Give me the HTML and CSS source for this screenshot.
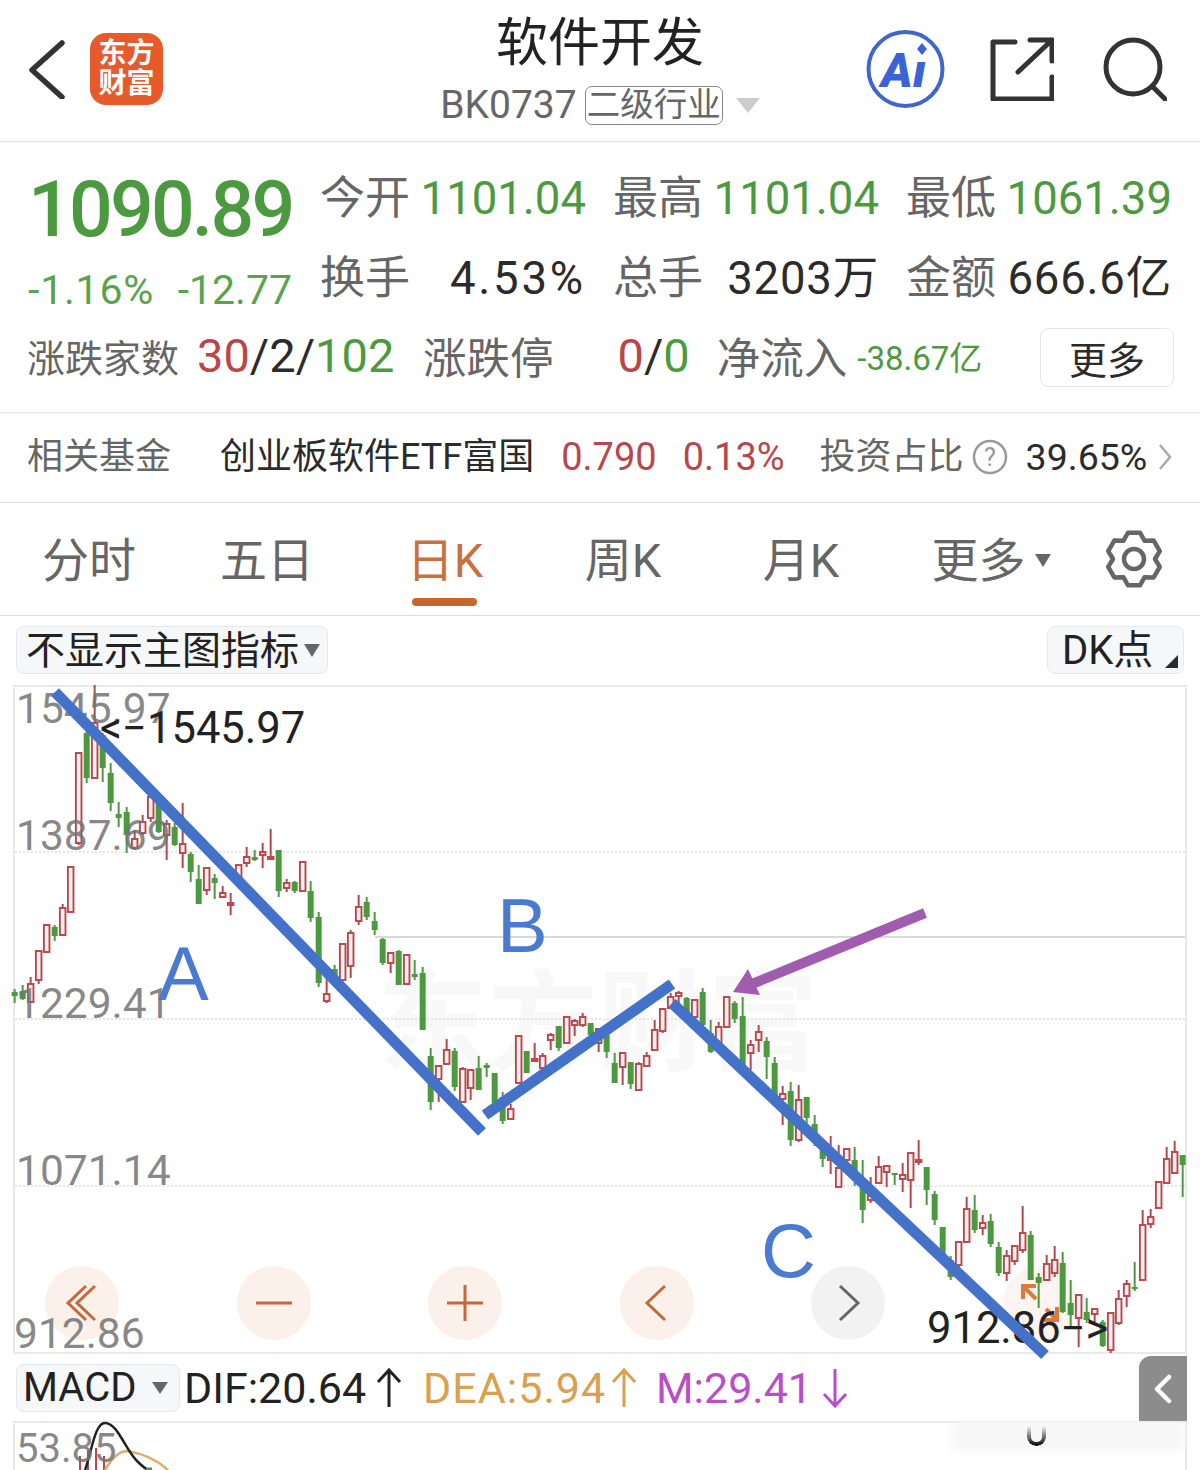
FILE: index.html
```html
<!DOCTYPE html>
<html lang="zh-CN">
<head>
    <meta charset="UTF-8">
    <meta name="viewport" content="width=device-width, initial-scale=1.0">
    <title>软件开发 BK0737</title>
    <link rel="stylesheet" href="styles.css">
</head>
<body>
    <header class="topbar">
        <div class="topbar-left">
            <svg class="back-icon" viewBox="0 0 40 60"><path d="M35 4 L5 31 L35 58"/></svg>
            <div class="logo"><span>东方</span><span>财富</span></div>
        </div>
        <div class="topbar-title">
            <h1>软件开发</h1>
            <div class="subtitle">
                <span class="code">BK0737</span>
                <span class="level-tag">二级行业</span>
                <span class="caret-down"></span>
            </div>
        </div>
        <div class="topbar-right">
            <svg class="ai-icon" viewBox="0 0 80 80">
                <circle cx="39.5" cy="40" r="37"/>
                <text x="15" y="58">Aı</text>
                <path class="ai-spark" d="M56 14 L61 20 L56 26 L51 20 Z"/>
            </svg>
            <svg class="line-icon share-icon" viewBox="0 0 64 64"><path d="M25 5 H3 V62 H62 V40 M28 35 L62 3 M40 3 H62 V24"/></svg>
            <svg class="line-icon" viewBox="0 0 64 64"><circle cx="30" cy="30" r="27"/><path d="M50 50 L62 62"/></svg>
        </div>
    </header>

    <section class="quote">
        <div class="quote-top">
            <div class="price">
                <div class="price-main">1090.89</div>
                <div class="price-change"><span class="pct">-1.16%</span><span>-12.77</span></div>
            </div>
            <div class="stats">
                <div class="stat"><span class="label">今开</span><span class="down">1101.04</span></div>
                <div class="stat"><span class="label">最高</span><span class="down">1101.04</span></div>
                <div class="stat"><span class="label">最低</span><span class="down">1061.39</span></div>
                <div class="stat"><span class="label">换手</span><span class="wide">4.53%</span></div>
                <div class="stat"><span class="label">总手</span><span class="unit">3203万</span></div>
                <div class="stat"><span class="label">金额</span><span class="unit">666.6亿</span></div>
            </div>
        </div>
        <div class="quote-bottom">
            <span class="label label-count">涨跌家数</span>
            <span class="ratio ratio-count"><span class="up">30</span>/2/<span class="down">102</span></span>
            <span class="label label-limit">涨跌停</span>
            <span class="ratio ratio-limit"><span class="up">0</span>/<span class="down">0</span></span>
            <span class="label label-flow">净流入</span>
            <span class="flow down">-38.67亿</span>
            <button class="more-btn">更多</button>
        </div>
    </section>

    <section class="fund">
        <span class="label">相关基金</span>
        <span class="fund-name">创业板软件ETF富国</span>
        <span class="up fund-price">0.790</span>
        <span class="up fund-pct">0.13%</span>
        <span class="label fund-share">投资占比</span>
        <svg class="help-icon" viewBox="0 0 36 36"><circle cx="18" cy="18" r="16"/><text x="18" y="27">?</text></svg>
        <span class="fund-value">39.65%</span>
        <svg class="fund-arrow" viewBox="0 0 14 30"><path d="M2 3 L12 15 L2 27"/></svg>
    </section>

    <nav class="tabs">
        <a>分时</a>
        <a>五日</a>
        <a class="active">日K</a>
        <a>周K</a>
        <a>月K</a>
        <a class="tab-more">更多<span class="caret-small"></span></a>
        <svg class="gear" viewBox="0 0 60 60">
            <path d="M23.9 3.7 L36.1 3.7 L40.5 11.8 L49.7 11.6 L55.8 22.1 L51 30 L55.8 37.9 L49.7 48.4 L40.5 48.2 L36.1 56.3 L23.9 56.3 L19.5 48.2 L10.3 48.4 L4.2 37.9 L9 30 L4.2 22.1 L10.3 11.6 L19.5 11.8 Z"/>
            <circle cx="30" cy="30" r="10"/>
        </svg>
    </nav>

    <div class="indicators">
        <div class="pill pill-main"><span class="pill-text">不显示主图指标</span><span class="caret-small dark"></span></div>
        <div class="pill pill-dk"><span class="pill-text">DK点</span><span class="corner"></span></div>
    </div>

    <div class="chart">
        <div class="zoom-row">
            <div class="zoom-btn"><svg viewBox="0 0 40 40"><path d="M24 3 L6 20 L24 37 M33 3 L15 20 L33 37"/></svg></div>
            <div class="zoom-btn"><svg viewBox="0 0 40 40"><path d="M2 20 H38"/></svg></div>
            <div class="zoom-btn"><svg viewBox="0 0 40 40"><path d="M2 20 H38 M20 2 V38"/></svg></div>
            <div class="zoom-btn"><svg viewBox="0 0 40 40"><path d="M28 3 L10 20 L28 37"/></svg></div>
            <div class="zoom-btn grey"><svg viewBox="0 0 40 40"><path d="M12 3 L30 20 L12 37"/></svg></div>
            <div class="zoom-btn faint"><svg viewBox="0 0 40 40"><path d="M3 16 V3 H16 M3 3 L16 16 M37 24 V37 H24 M37 37 L26 26"/></svg></div>
        </div>

        <svg id="candles" class="chart-layer" viewBox="13 685 1174 669">
            <text class="watermark" x="378" y="1062">东方财富</text>
            <path class="grid-dots" d="M15 852 H1185 M15 1019 H1185 M15 1186 H1185"/>
            <path class="grid-solid" d="M375 937 H1185"/>
        </svg>

        <span class="axis-label" style="top: 4px">1545.97</span>
        <span class="axis-label" style="top: 131px">1387.69</span>
        <span class="axis-label" style="top: 299px">1229.41</span>
        <span class="axis-label" style="top: 466px">1071.14</span>
        <span class="axis-label" style="top: 629px; left: 1px">912.86</span>
        <span class="extreme-label" style="top: 24px; left: 87px">&lt;−1545.97</span>
        <span class="extreme-label" style="top: 624px; left: 914px">912.86−&gt;</span>

        <!-- hand drawn wave markup on top of the chart -->
        <svg class="chart-layer markup" viewBox="13 685 1174 669">
            <path class="wave" d="M55 692 L482 1132"/>
            <path class="wave" d="M485 1115 L672 984"/>
            <path class="wave" d="M672 1003 L1045 1355"/>
            <path class="pointer" d="M925 913 L752 984"/>
            <path class="pointer-head" d="M733 992 L748 969 L760 995 Z"/>
            <text class="wave-letter" x="158" y="1000">A</text>
            <text class="wave-letter" x="497" y="952">B</text>
            <text class="wave-letter" x="761" y="1277">C</text>
        </svg>
    </div>

    <div class="macd-row">
        <div class="pill pill-macd">MACD<span class="caret-small"></span></div>
        <span class="macd-val macd-dif">DIF:20.64</span>
        <svg class="macd-arrow dif" viewBox="0 0 26 40"><path d="M13 39 V2 M2 14 L13 2 L24 14"/></svg>
        <span class="macd-val macd-dea">DEA:5.94</span>
        <svg class="macd-arrow dea" viewBox="0 0 26 40"><path d="M13 39 V2 M2 14 L13 2 L24 14"/></svg>
        <span class="macd-val macd-m">M:29.41</span>
        <svg class="macd-arrow m" viewBox="0 0 26 40"><path d="M13 1 V38 M2 26 L13 38 L24 26"/></svg>
        <div class="side-handle"><svg viewBox="0 0 20 30"><path d="M16 3 L4 15 L16 27"/></svg></div>
    </div>

    <div class="macd-chart">
        <svg class="chart-layer" viewBox="13 1421 1174 49">
            <path class="macd-bar-red" d="M80 1470 V1456 M88 1470 V1450 M96 1470 V1448 M104 1470 V1456"/>
            <path class="macd-dea-line" d="M105 1470 C112 1458 120 1451 127 1451 C140 1453 155 1458 168 1470"/>
            <path class="macd-dif-line" d="M85 1470 C92 1450 95 1423 105 1423 C118 1423 125 1450 138 1462 C142 1466 146 1470 150 1470"/>
            <path class="macd-bar-green" d="M146 1469 H152"/>
        </svg>
        <span class="macd-label">53.85</span>
        <div class="haze"></div>
        <div class="stub"></div>
    </div>

    <script src="chart.js"></script>
</body>
</html>
```
FILE: styles.css
```css
* {
    box-sizing: border-box;
}
body {
    font-family: Roboto, "Noto Sans CJK SC", sans-serif;
    margin: 0;
    width: 1200px;
    height: 1470px;
    overflow: hidden;
    background-color: #fff;
    color: #2b2b2b;
}
.up {
    color: #b8464a;
}
.down {
    color: #4c9a40;
}
.label {
    color: #666;
}

/* top bar */
.topbar {
    display: grid;
    grid-template-columns: 1fr auto 1fr;
    height: 142px;
    border-bottom: 1px solid #ddd;
}
.topbar-left {
    display: flex;
    align-items: center;
    gap: 23px;
    padding: 0 0 3px 27px;
}
.back-icon {
    width: 40px;
    height: 60px;
    fill: none;
    stroke: #333;
    stroke-width: 5.5;
    stroke-linecap: round;
    stroke-linejoin: round;
}
.logo {
    display: flex;
    flex-direction: column;
    align-items: center;
    justify-content: center;
    width: 73px;
    height: 72px;
    background-color: #e75a2b;
    border-radius: 16px;
    color: #fff;
    font-size: 28px;
    font-weight: 700;
    line-height: 30px;
}
.topbar-title {
    text-align: center;
}
.topbar-title h1 {
    margin: 14px 0 0;
    font-size: 52px;
    font-weight: 400;
    line-height: 60px;
    color: #222;
}
.subtitle {
    display: flex;
    align-items: center;
    margin-top: 11px;
    height: 40px;
    color: #666;
}
.code {
    font-size: 39px;
}
.level-tag {
    margin-left: 8px;
    padding: 0 1px;
    height: 39px;
    border: 1.5px solid #888;
    border-radius: 7px;
    font-size: 33.5px;
    line-height: 35px;
}
.caret-down {
    margin-left: 13px;
    border-style: solid;
    border-width: 15px 12px 0;
    border-color: #ccc transparent transparent;
}
.topbar-right {
    display: flex;
    align-items: center;
    justify-content: flex-end;
    gap: 44px;
    padding: 0 33px 3px 0;
}
.ai-icon {
    width: 80px;
    height: 80px;
}
.ai-icon circle {
    fill: none;
    stroke: #3f66cc;
    stroke-width: 4;
}
.ai-icon text {
    font-family: Roboto, sans-serif;
    font-size: 48px;
    font-weight: 900;
    font-style: italic;
    fill: #3a63d8;
}
.ai-spark {
    fill: #3a63d8;
}
.line-icon {
    width: 64px;
    height: 64px;
    fill: none;
    stroke: #333;
    stroke-width: 5;
    stroke-linecap: round;
    stroke-linejoin: round;
}
.share-icon {
    margin-right: 5px;
}

/* price block */
.quote {
    height: 271px;
    padding-top: 15px;
    border-bottom: 1px solid #e4e4e4;
}
.quote-top {
    display: flex;
}
.price {
    width: 322px;
    padding-left: 28px;
}
.price-main {
    height: 100px;
    font-size: 77px;
    font-weight: 500;
    letter-spacing: -2.8px;
    line-height: 106px;
    color: #4c9a40;
}
.price-change {
    display: flex;
    justify-content: space-between;
    width: 264px;
    height: 60px;
    font-size: 41px;
    line-height: 66px;
    color: #5aa34e;
}
.price-change .pct {
    letter-spacing: 0.8px;
}
.stats {
    display: grid;
    grid-template-columns: repeat(3, 264px);
    grid-template-rows: 80px 80px;
    column-gap: 29px;
    padding-top: 2px;
    height: 160px;
}
.stat {
    display: flex;
    justify-content: space-between;
    align-items: center;
    font-size: 45.5px;
    line-height: 50px;
}
.stat .label {
    margin: -1px 0 0 -2px;
    font-size: 45px;
}
.stat .wide {
    letter-spacing: 2.8px;
}
.stat .unit {
    letter-spacing: 0.8px;
}
.quote-bottom {
    display: flex;
    align-items: center;
    height: 77px;
    padding-left: 27px;
}
.label-count {
    font-size: 38px;
}
.ratio {
    font-size: 47px;
}
.ratio-count {
    margin-left: 18px;
    width: 198px;
}
.label-limit {
    margin-left: 28px;
    font-size: 43.5px;
}
.ratio-limit {
    margin-left: 64px;
}
.label-flow {
    margin-left: 27px;
    font-size: 43.5px;
}
.flow {
    margin-left: 10px;
    font-size: 33px;
}
.more-btn {
    margin: 3px 26px 0 auto;
    padding-bottom: 8px;
    width: 134px;
    height: 59px;
    background: #fff;
    border: 1.5px solid #e6e6e6;
    border-radius: 8px;
    font-family: inherit;
    font-size: 38px;
    color: #2b2b2b;
}

/* related fund row */
.fund {
    display: flex;
    align-items: center;
    height: 90px;
    padding: 0 0 1px 27px;
    border-bottom: 1px solid #ddd;
    font-size: 36px;
    line-height: 44px;
}
.fund-name {
    margin-left: 49px;
}
.fund-price {
    margin-left: 27px;
    font-size: 38px;
}
.fund-pct {
    margin-left: 26px;
    font-size: 38px;
}
.fund-share {
    margin-left: 35px;
}
.help-icon {
    margin-left: 8px;
    width: 36px;
    height: 36px;
}
.help-icon circle {
    fill: none;
    stroke: #999;
    stroke-width: 2.5;
}
.help-icon text {
    font-size: 25px;
    text-anchor: middle;
    fill: #999;
}
.fund-value {
    margin-left: 18px;
    font-size: 37.5px;
}
.fund-arrow {
    margin-left: 11px;
    width: 14px;
    height: 30px;
    fill: none;
    stroke: #aaa;
    stroke-width: 2.5;
}

/* period tabs */
.tabs {
    display: grid;
    grid-template-columns: repeat(6, 178px) 1fr;
    align-items: center;
    height: 113px;
    padding-bottom: 5px;
    border-bottom: 1px solid #ddd;
}
.tabs a {
    position: relative;
    text-align: center;
    font-size: 47px;
    color: #666;
}
.tabs a.active {
    color: #c87040;
}
.tabs a.active::after {
    content: "";
    position: absolute;
    left: 56px;
    bottom: -15px;
    width: 65px;
    height: 8px;
    background-color: #c9652f;
    border-radius: 4px;
}
.tab-more {
    padding-left: 24px;
}
.caret-small {
    display: inline-block;
    margin-left: 9px;
    vertical-align: 10px;
    border-style: solid;
    border-width: 13px 8px 0;
    border-color: #666 transparent transparent;
}
.caret-small.dark {
    margin-left: 5px;
}
.gear {
    justify-self: center;
    width: 60px;
    height: 60px;
    margin-top: 4px;
    fill: none;
    stroke: #666;
    stroke-width: 4.5;
    stroke-linejoin: round;
}

/* indicator pickers */
.indicators {
    display: flex;
    justify-content: space-between;
    height: 69px;
    padding: 10px 16px 0;
}
.pill {
    display: flex;
    align-items: center;
    height: 48px;
    background-color: #f6f7f9;
    border: 1.5px solid #e6e8ea;
    border-radius: 8px;
    color: #222;
}
.pill-text {
    margin-top: -7px;
}
.pill-main {
    width: 312px;
    padding-left: 9px;
    font-size: 39px;
}
.pill-main .caret-small {
    vertical-align: 0;
}
.pill-dk {
    position: relative;
    width: 137px;
    padding-left: 14px;
    font-size: 40px;
}
.corner {
    position: absolute;
    right: 5px;
    bottom: 5px;
    border-style: solid;
    border-width: 0 0 13px 13px;
    border-color: transparent transparent #2b2b2b;
}

/* kline chart */
.chart {
    position: relative;
    margin-left: 13px;
    width: 1174px;
    height: 669px;
    box-shadow: inset 0 0 0 2px #e9e9e9;
}
.chart-layer {
    position: absolute;
    left: 0;
    top: 0;
    width: 100%;
    height: 100%;
    overflow: visible;
}
.watermark {
    font-size: 110px;
    font-weight: 700;
    fill: #f8f8f8;
}
.grid-dots {
    fill: none;
    stroke: #ddd;
    stroke-width: 1.5;
    stroke-dasharray: 2 2;
}
.grid-solid {
    fill: none;
    stroke: #ccc;
    stroke-width: 1.5;
}
.axis-label,
.extreme-label {
    position: absolute;
    left: 3px;
    font-size: 42.5px;
    line-height: 40px;
    white-space: nowrap;
}
.axis-label {
    color: rgba(115, 115, 115, 0.85);
}
.extreme-label {
    font-size: 43.5px;
    color: #222;
}
.zoom-row {
    position: absolute;
    left: 32px;
    top: 581px;
    display: flex;
    gap: 117.5px;
}
.zoom-btn {
    display: flex;
    align-items: center;
    justify-content: center;
    width: 74px;
    height: 74px;
    background-color: #fbf0ea;
    border-radius: 50%;
}
.zoom-btn svg {
    width: 40px;
    height: 40px;
    fill: none;
    stroke: #c4683a;
    stroke-width: 3;
}
.zoom-btn.grey {
    background-color: #f2f2f2;
}
.zoom-btn.grey svg {
    stroke: #666;
}
.zoom-btn.faint {
    background-color: rgba(251, 240, 234, 0.7);
}
.zoom-btn.faint svg {
    stroke: #dc7a3e;
    stroke-width: 4;
}
.wave {
    fill: none;
    stroke: #4472c8;
    stroke-width: 11;
}
.pointer {
    fill: none;
    stroke: #a05cae;
    stroke-width: 10;
}
.pointer-head {
    fill: #a05cae;
}
.wave-letter {
    font-family: "Liberation Sans", sans-serif;
    font-size: 76px;
    fill: #4a7bd0;
}

/* MACD legend */
.macd-row {
    position: relative;
    display: flex;
    align-items: center;
    height: 67px;
    padding-left: 16px;
    font-size: 43px;
}
.pill-macd {
    width: 164px;
    padding-left: 6px;
    font-size: 40px;
}
.pill-macd .caret-small {
    margin-left: 16px;
    vertical-align: 0;
    border-width: 12px 8px 0;
}
.macd-val {
    white-space: nowrap;
}
.macd-dif {
    margin-left: 4px;
    color: #222;
}
.macd-dea {
    margin-left: 21px;
    letter-spacing: 1px;
    color: #d9a050;
}
.macd-m {
    margin-left: 19px;
    color: #b84fc8;
}
.macd-arrow {
    margin-left: 10px;
    width: 26px;
    height: 40px;
    fill: none;
    stroke-width: 3;
}
.macd-arrow.dif {
    stroke: #222;
}
.macd-arrow.dea {
    margin-left: 5px;
    stroke: #d9a050;
}
.macd-arrow.m {
    stroke: #b84fc8;
}
.side-handle {
    position: absolute;
    right: 13px;
    top: 2px;
    display: flex;
    align-items: center;
    justify-content: center;
    width: 48px;
    height: 66px;
    background-color: #8c8c8c;
    border-top-left-radius: 12px;
}
.side-handle svg {
    width: 20px;
    height: 30px;
    fill: none;
    stroke: #fff;
    stroke-width: 4.5;
    stroke-linecap: round;
    stroke-linejoin: round;
}

/* MACD panel, only its top edge is on screen */
.macd-chart {
    position: relative;
    margin-left: 13px;
    width: 1174px;
    height: 49px;
    overflow: hidden;
    box-shadow: inset 2px 2px 0 #e9e9e9, inset -2px 0 0 #e9e9e9;
}
.macd-label {
    position: absolute;
    left: 3px;
    top: 8px;
    font-size: 40px;
    line-height: 40px;
    color: rgba(115, 115, 115, 0.85);
}
.macd-dif-line,
.macd-dea-line {
    fill: none;
    stroke-width: 2.5;
}
.macd-dif-line {
    stroke: #222;
}
.macd-dea-line {
    stroke: #dcae66;
}
.macd-bar-red {
    fill: none;
    stroke: #b8464a;
    stroke-width: 2;
}
.macd-bar-green {
    fill: none;
    stroke: #4c9a40;
    stroke-width: 3;
}
.haze {
    position: absolute;
    left: 940px;
    top: 0;
    width: 230px;
    height: 30px;
    background-color: #f6f6f6;
    filter: blur(5px);
}
.stub {
    position: absolute;
    left: 1014px;
    top: 0;
    width: 19px;
    height: 25px;
    border: 4px solid transparent;
    border-top: none;
    border-radius: 0 0 9px 9px;
    background: linear-gradient(to bottom, rgba(0, 0, 0, 0) 20%, #000 100%) border-box;
    -webkit-mask: linear-gradient(#000 0 0) padding-box, linear-gradient(#000 0 0) border-box;
    -webkit-mask-composite: xor;
    mask-composite: exclude;
}
```
FILE: chart.js
```js
// daily candles: [up?, wick top, body top, body bottom, wick bottom], y in page pixels
const candles = [
    [0,989,992,996,1003],[0,985,991,999,1000],[1,977,984,1002,1003],[1,951,951,980,984],[1,924,925,952,953],
    [0,925,927,936,941],[1,904,908,935,936],[1,867,867,912,912],[1,753,753,843,845],[0,730,733,778,783],
    [1,685,723,778,778],[0,733,735,768,782],[0,763,773,803,811],[0,802,814,818,827],[0,807,812,835,853],
    [1,830,839,848,850],[1,815,822,833,835],[1,792,797,818,822],[0,792,795,832,833],[1,820,824,835,860],
    [0,823,827,845,846],[1,803,844,853,868],[0,852,854,872,882],[0,865,879,904,904],[1,868,868,890,895],
    [0,874,878,883,899],[1,886,893,897,898],[1,893,903,905,915],[1,865,865,883,887],[1,847,857,863,867],
    [0,850,857,860,861],[1,843,852,855,868],[1,829,857,859,859],[0,850,850,891,897],[1,879,883,888,892],
    [0,881,882,891,893],[1,861,862,891,891],[0,881,891,918,922],[0,912,917,983,987],[1,977,994,1001,1003],
    [0,965,969,977,980],[1,944,944,980,980],[1,930,933,966,978],[1,895,907,921,925],[0,897,902,917,920],
    [0,912,921,930,935],[0,938,939,963,965],[1,952,953,963,973],[0,950,951,985,985],[1,955,955,984,985],
    [0,960,974,977,980],[0,967,973,1030,1030],[0,1048,1056,1102,1110],[1,1065,1066,1079,1102],[1,1039,1050,1064,1064],
    [0,1048,1051,1087,1091],[1,1067,1069,1102,1102],[1,1069,1070,1088,1100],[0,1056,1068,1090,1090],[0,1063,1065,1068,1077],
    [0,1073,1073,1103,1103],[0,1092,1097,1121,1124],[1,1104,1109,1119,1119],[1,1036,1036,1083,1083],[0,1051,1051,1073,1073],
    [1,1043,1059,1061,1062],[1,1053,1056,1068,1068],[1,1033,1035,1040,1050],[0,1026,1026,1048,1051],[1,1017,1017,1043,1043],
    [1,1019,1021,1025,1036],[1,1013,1017,1025,1027],[0,1023,1023,1035,1036],[1,1028,1029,1043,1052],[0,1035,1035,1052,1058],
    [0,1053,1063,1083,1083],[1,1053,1053,1067,1085],[0,1062,1062,1084,1089],[1,1062,1064,1090,1090],[1,1052,1056,1066,1066],
    [1,1020,1030,1050,1050],[1,1008,1009,1031,1033],[1,993,997,1008,1008],[1,991,993,996,1003],[0,997,998,1013,1015],
    [1,999,1000,1017,1017],[0,988,992,1025,1027],[0,1020,1033,1052,1053],[1,1022,1027,1043,1043],[1,996,997,1027,1028],
    [0,1001,1003,1019,1023],[0,997,1016,1065,1067],[1,1040,1045,1053,1070],[1,1025,1032,1040,1052],[0,1037,1041,1057,1079],
    [0,1057,1063,1096,1097],[1,1086,1094,1099,1125],[0,1082,1091,1140,1146],[1,1085,1100,1140,1142],[0,1097,1097,1118,1123],
    [0,1115,1124,1140,1146],[0,1150,1150,1159,1167],[1,1136,1156,1160,1174],[1,1145,1168,1187,1187],[1,1149,1149,1160,1165],
    [0,1147,1160,1180,1186],[0,1160,1183,1210,1223],[1,1177,1195,1200,1203],[1,1156,1167,1183,1183],[1,1165,1166,1172,1187],
    [0,1173,1173,1175,1185],[1,1163,1175,1179,1192],[1,1153,1153,1180,1208],[1,1140,1160,1162,1165],[0,1167,1167,1190,1205],
    [0,1191,1194,1220,1225],[0,1227,1227,1257,1260],[0,1256,1260,1277,1280],[1,1242,1242,1265,1267],[1,1197,1209,1242,1242],
    [0,1195,1210,1230,1233],[1,1215,1223,1228,1235],[0,1214,1221,1244,1247],[0,1242,1247,1273,1276],[1,1250,1256,1273,1281],
    [1,1245,1246,1261,1265],[1,1206,1233,1250,1253],[0,1231,1235,1280,1280],[0,1273,1277,1283,1308],[1,1255,1264,1280,1281],
    [1,1246,1260,1273,1277],[0,1252,1263,1312,1313],[0,1280,1303,1315,1328],[1,1294,1295,1318,1347],[0,1298,1312,1320,1323],
    [1,1308,1309,1314,1322],[0,1320,1322,1346,1347],[1,1313,1313,1350,1353],[1,1290,1299,1323,1325],[1,1280,1284,1296,1307],
    [0,1262,1287,1289,1291],[1,1210,1225,1280,1280],[1,1209,1217,1224,1228],[1,1182,1182,1208,1208],[1,1147,1159,1183,1183],
    [1,1141,1152,1173,1174],[0,1155,1155,1165,1197]
];

const RED = "#b8464a";
const GREEN = "#4c9a40";
const svg = document.getElementById("candles");

function addShape(tag, attrs) {
    const el = document.createElementNS("http://www.w3.org/2000/svg", tag);
    for (const key in attrs) {
        el.setAttribute(key, attrs[key]);
    }
    svg.appendChild(el);
}

candles.forEach(function (c, i) {
    const x = 14.67 + 8 * i;
    const color = c[0] ? RED : GREEN;
    addShape("line", { x1: x, x2: x, y1: c[1], y2: c[4], stroke: color, "stroke-width": 2 });
    if (c[0]) {
        // rising days are hollow
        addShape("rect", { x: x - 2.8, y: c[2], width: 5.6, height: Math.max(c[3] - c[2], 1), fill: "#fdf3f3", stroke: color, "stroke-width": 1.9 });
    } else {
        addShape("rect", { x: x - 3, y: c[2], width: 6, height: Math.max(c[3] - c[2], 1), fill: color });
    }
});
```
